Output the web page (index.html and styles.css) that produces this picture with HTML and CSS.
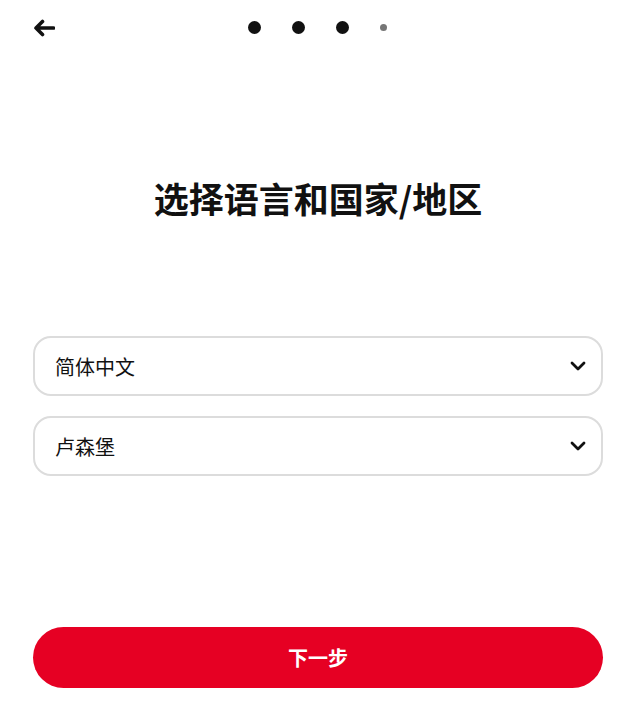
FILE: index.html
```html
<!DOCTYPE html>
<html lang="zh-CN">
<head>
<meta charset="utf-8">
<title>选择语言和国家/地区</title>
<link rel="stylesheet" href="styles.css">
</head>
<body>
<div class="page">
  <header class="top">
    <button class="back" aria-label="返回">
      <svg width="22" height="18" viewBox="0 0 22 18"><path d="M20.5 9H3M9.5 2.5 3 9l6.5 6.5" fill="none" stroke="#111" stroke-width="3.6" stroke-linecap="round" stroke-linejoin="round"/></svg>
    </button>
    <div class="dots">
      <span class="dot"></span><span class="dot"></span><span class="dot"></span><span class="dot small"></span>
    </div>
    <div></div>
  </header>
  <h1 class="title">选择语言和国家/地区</h1>
  <div class="fields">
    <div class="select"><span>简体中文</span>
      <svg class="chev" width="16" height="10" viewBox="0 0 16 10"><path d="M2 2l6 6 6-6" fill="none" stroke="#111" stroke-width="2.8" stroke-linecap="round" stroke-linejoin="round"/></svg>
    </div>
    <div class="select"><span>卢森堡</span>
      <svg class="chev" width="16" height="10" viewBox="0 0 16 10"><path d="M2 2l6 6 6-6" fill="none" stroke="#111" stroke-width="2.8" stroke-linecap="round" stroke-linejoin="round"/></svg>
    </div>
  </div>
  <button class="next">下一步</button>
</div>
</body>
</html>
```

FILE: styles.css
```css
html, body {
  margin: 0;
  padding: 0;
  background: #fff;
}
body {
  font-family: "Noto Sans CJK SC", "Noto Sans", sans-serif;
  color: #111;
}
.page {
  box-sizing: border-box;
  height: 701px;
  padding: 0 34px 13px 33px;
  display: flex;
  flex-direction: column;
}
.top {
  height: 55px;
  display: grid;
  grid-template-columns: 1fr auto 1fr;
  align-items: center;
}
.back {
  border: 0;
  background: none;
  padding: 0;
  width: 22px;
  height: 18px;
  display: flex;
  align-items: center;
  justify-self: start;
  margin-top: 1px;
}
.dots {
  display: flex;
  align-items: center;
  gap: 31px;
  margin-left: -1px;
}
.dot {
  width: 13px;
  height: 13px;
  border-radius: 50%;
  background: #111;
}
.dot.small {
  width: 7px;
  height: 7px;
  background: #767676;
}
.title {
  margin: 122px 0 0;
  text-align: center;
  font-size: 35px;
  line-height: 42px;
  font-weight: 700;
}
.fields {
  margin-top: 117px;
  display: flex;
  flex-direction: column;
  gap: 20px;
}
.select {
  box-sizing: border-box;
  height: 60px;
  border: 2px solid #dcdcdc;
  border-radius: 18px;
  display: flex;
  align-items: center;
  justify-content: space-between;
  padding: 0 15px 0 20px;
  font-size: 20px;
  color: #111;
}
.next {
  margin-top: auto;
  height: 61px;
  border: 0;
  border-radius: 31px;
  background: #e60023;
  color: #fff;
  font-family: "Noto Sans CJK SC", "Noto Sans", sans-serif;
  font-size: 20px;
  font-weight: 700;
}
```
